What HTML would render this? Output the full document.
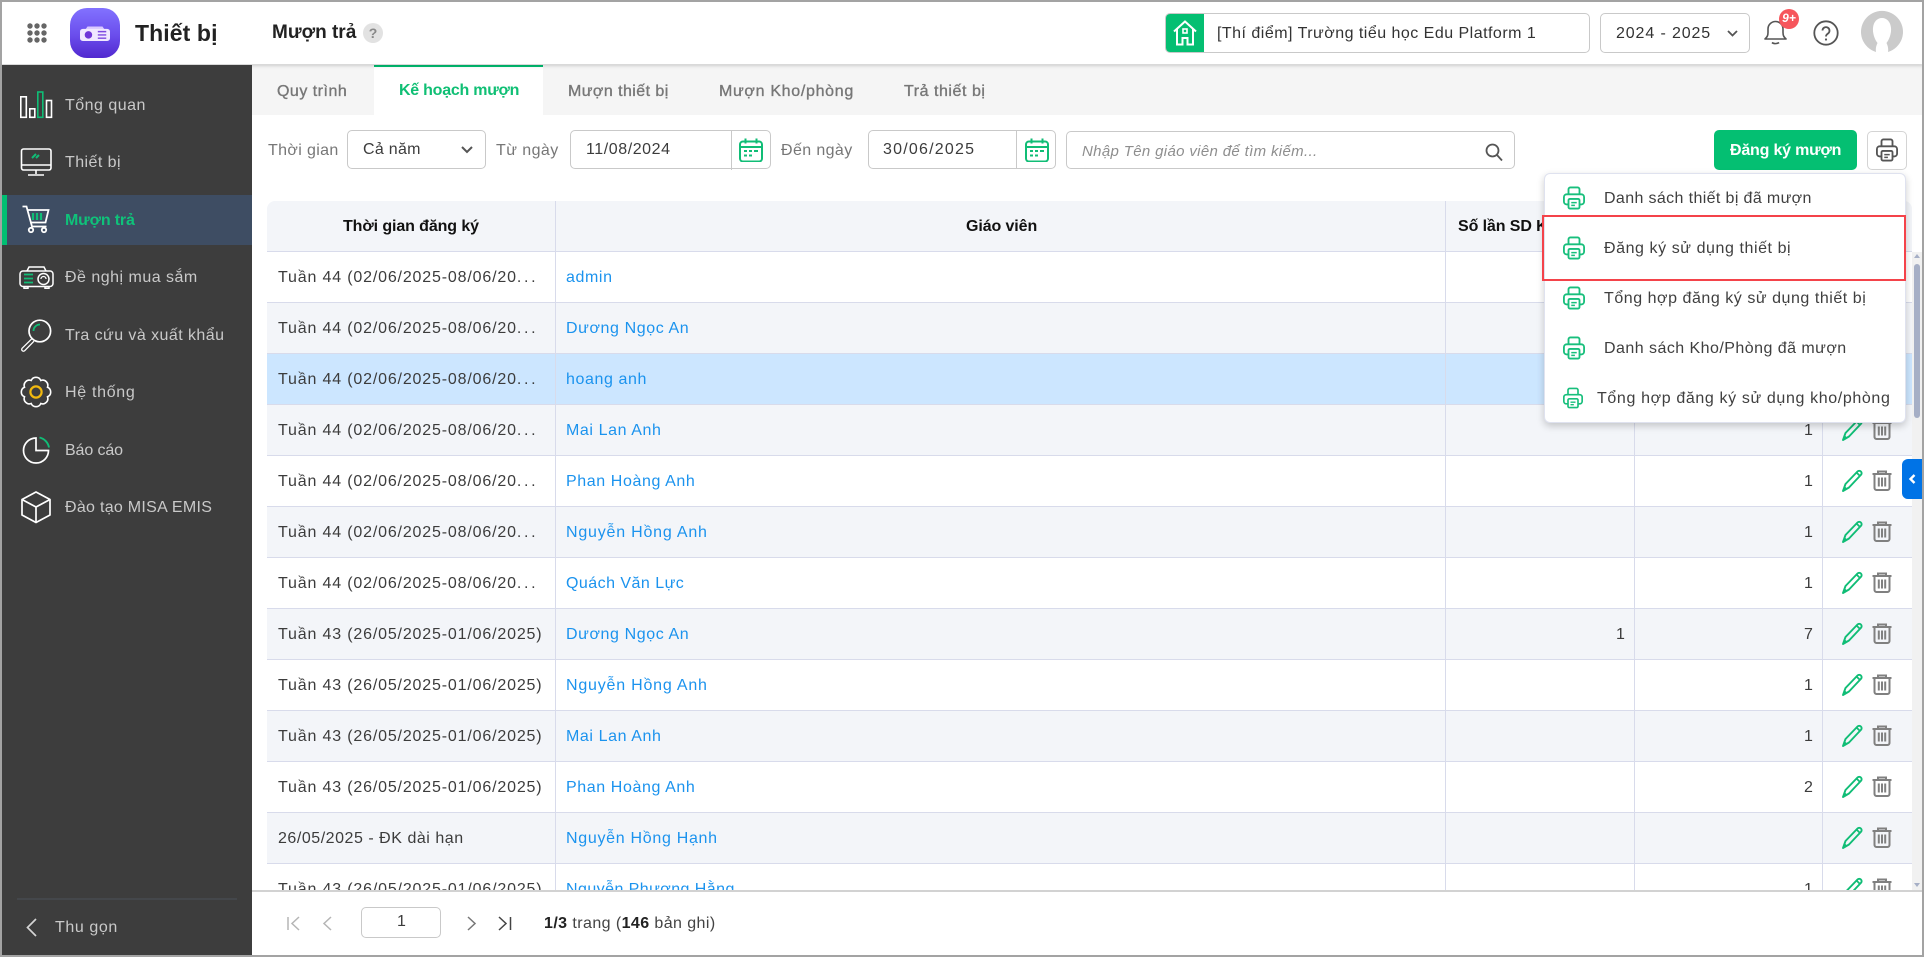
<!DOCTYPE html>
<html lang="vi">
<head>
<meta charset="utf-8">
<title>Thiết bị - Mượn trả</title>
<style>
*{box-sizing:border-box}
html,body{margin:0;padding:0}
body{width:1924px;height:957px;overflow:hidden;background:#fff;position:relative;font-family:"Liberation Sans",Arial,sans-serif;font-size:16px;letter-spacing:.09px;color:#3c3c3c}
.a{position:absolute}
.t{position:absolute;white-space:nowrap;line-height:20px;height:20px;margin-top:1px}
svg{position:absolute;overflow:visible;fill:none}
#wrap{position:absolute;left:0;top:0;width:1924px;height:957px}
.header{position:absolute;left:0;top:0;width:1924px;height:64px;background:#fff;box-shadow:0 1px 4px rgba(0,0,0,.25);z-index:5}
.side{position:absolute;left:0;top:65px;width:252px;height:892px;background:#3d3d3d;z-index:6}
.active{position:absolute;left:0;top:130px;width:252px;height:50px;background:linear-gradient(90deg,#3d3d3d 0,#3d3d3d 2px,#00bf72 2px,#00bf72 7px,#3e4d63 7px)}
.m{color:#c9c9c9;left:65px;letter-spacing:.44px}
.tabs{position:absolute;left:252px;top:65px;width:1672px;height:50px;background:#f5f5f5}
.tab-on{position:absolute;left:374px;top:65px;width:169px;height:50px;background:#fff;border-top:2px solid #00bf72}
.tb0{color:#777;font-weight:400;-webkit-text-stroke:.35px #777;top:81px}
.box{position:absolute;background:#fff;border:1px solid #c9c9c9;border-radius:5px}
.lbl{color:#777;letter-spacing:.36px}
.th{position:absolute;left:267px;top:201px;width:1645px;height:51px;background:#f3f5f9;border-bottom:1px solid #d8dbeb;border-radius:8px 8px 0 0}
.tb{position:absolute;left:267px;top:252px;width:1645px;height:638px;overflow:hidden}
.r{position:relative;height:51px;border-bottom:1px solid #d8dbeb;background:#fff}
.r.g{background:#f3f5f9}
.r.s{background:#cce6ff}
.c1{left:11px;top:15px;letter-spacing:.83px}
.c1 span{letter-spacing:2.73px}
.c2{left:299px;top:15px;color:#1b93ee;letter-spacing:.6px}
.c3{right:287px;top:15px}
.c4{right:99px;top:15px}
.r .p{left:1575px;top:13px;width:21px;height:23px}
.r .d{left:1605px;top:14px;width:20px;height:21px}
.vl{position:absolute;top:201px;width:1px;height:689px;background:#d8dbeb}
.foot{position:absolute;left:252px;top:890px;width:1672px;height:67px;background:#fff;border-top:2px solid #d2d2d2}
.menu{position:absolute;left:1544px;top:173px;width:362px;height:250px;background:#fff;border:1px solid #dfe2ef;border-radius:6px;box-shadow:0 3px 8px rgba(0,0,0,.2);z-index:8}
.it{color:#3f3f3f}
</style>
</head>
<body>
<svg width="0" height="0" style="position:absolute">
  <defs>
    <symbol id="printer" viewBox="0 0 24 26">
      <path d="M6 9V3.500A2 2 0 0 1 8 1.500h8a2 2 0 0 1 2 2V9" stroke="currentColor" stroke-width="2"/>
      <path d="M6 20H4a3 3 0 0 1-3-3v-5a3 3 0 0 1 3-3h16a3 3 0 0 1 3 3v5a3 3 0 0 1-3 3h-2" stroke="currentColor" stroke-width="2"/>
      <rect x="6" y="14" width="12" height="10.500" rx="1.500" stroke="currentColor" stroke-width="2" fill="#fff"/>
      <path d="M9 18h6M9 21h4" stroke="currentColor" stroke-width="1.600"/>
    </symbol>
    <symbol id="pencil" viewBox="0 0 21 23">
      <path d="M1 22 3.500 15 15.500 2.500a2.400 2.400 0 0 1 3.400 0 2.400 2.400 0 0 1 0 3.400L7 18.500Z" stroke="#10bd76" stroke-width="1.900" stroke-linejoin="round"/>
      <path d="M14.500 3.500 18 7" stroke="#10bd76" stroke-width="1.800"/>
      <path d="M1 22 2.500 17 5.500 20Z" fill="#10bd76"/>
    </symbol>
    <symbol id="trash" viewBox="0 0 20 21">
      <path d="M.5 4h19M6 4V1.500h8V4" stroke="#808080" stroke-width="2"/>
      <path d="M2.500 4v14a2 2 0 0 0 2 2h11a2 2 0 0 0 2-2V4" stroke="#808080" stroke-width="2"/>
      <path d="M6.800 7.500V16.500M10 7.500V16.500M13.200 7.500V16.500" stroke="#808080" stroke-width="2"/>
    </symbol>
    <symbol id="cal" viewBox="0 0 24 24">
      <rect x="1" y="3.500" width="22" height="20" rx="3" stroke="#10bd76" stroke-width="2"/>
      <path d="M1 9h22M6.500 .5v5M17.500 .5v5" stroke="#10bd76" stroke-width="2"/>
      <path d="M5 13h3M10 13h3M15 13h4M5 17.500h3M10 17.500h3" stroke="#10bd76" stroke-width="2"/>
    </symbol>
  </defs>
</svg>

<div id="wrap">

  <div class="tabs"></div>
  <div class="tab-on"></div>
  <div class="t tb0" style="left:277px;letter-spacing:.49px">Quy trình</div>
  <div class="t" style="left:399px;top:80px;color:#0fbf74;font-weight:700;letter-spacing:-.25px">Kế hoạch mượn</div>
  <div class="t tb0" style="left:568px;letter-spacing:.44px">Mượn thiết bị</div>
  <div class="t tb0" style="left:719px;letter-spacing:.69px">Mượn Kho/phòng</div>
  <div class="t tb0" style="left:904px;letter-spacing:.54px">Trả thiết bị</div>

  <div class="t lbl" style="left:268px;top:140px">Thời gian</div>
  <div class="box" style="left:347px;top:130px;width:139px;height:39px"></div>
  <div class="t" style="left:363px;top:139px;letter-spacing:.29px">Cả năm</div>
  <svg style="left:461px;top:146px" width="12" height="8"><path d="M1 1l5 5 5-5" stroke="#555" stroke-width="2"/></svg>

  <div class="t lbl" style="left:496px;top:140px;letter-spacing:.44px">Từ ngày</div>
  <div class="box" style="left:570px;top:130px;width:201px;height:39px"></div>
  <div class="a" style="left:731px;top:130px;width:1px;height:40px;background:#c9c9c9"></div>
  <div class="t" style="left:586px;top:139px;letter-spacing:.57px">11/08/2024</div>
  <svg style="left:739px;top:138px" width="24" height="24"><use href="#cal"/></svg>

  <div class="t lbl" style="left:781px;top:140px;letter-spacing:.39px">Đến ngày</div>
  <div class="box" style="left:868px;top:130px;width:188px;height:39px"></div>
  <div class="a" style="left:1016px;top:130px;width:1px;height:39px;background:#c9c9c9"></div>
  <div class="t" style="left:883px;top:139px;letter-spacing:1.22px">30/06/2025</div>
  <svg style="left:1025px;top:138px" width="24" height="24"><use href="#cal"/></svg>

  <div class="box" style="left:1066px;top:131px;width:449px;height:38px"></div>
  <div class="t" style="left:1082px;top:141px;color:#8e8e8e;font-style:italic;font-size:15px;letter-spacing:.34px">Nhập Tên giáo viên để tìm kiếm...</div>
  <svg style="left:1485px;top:143px" width="18" height="18"><circle cx="7.500" cy="7.500" r="6" stroke="#555" stroke-width="1.800"/><path d="M12 12l5 5.500" stroke="#555" stroke-width="1.800"/></svg>

  <div class="a" style="left:1714px;top:130px;width:143px;height:40px;background:#04bf72;border-radius:5px"></div>
  <div class="t" style="left:1730px;top:140px;color:#fff;font-weight:700;letter-spacing:-.2px">Đăng ký mượn</div>
  <div class="box" style="left:1867px;top:131px;width:40px;height:39px;border-color:#d4d4d4"></div>
  <svg style="left:1876px;top:138px;color:#555" width="22" height="24"><use href="#printer"/></svg>

  <div class="th"></div>
  <div class="t" style="left:343px;top:216px;font-weight:700;color:#111;letter-spacing:-.1px">Thời gian đăng ký</div>
  <div class="t" style="left:966px;top:216px;font-weight:700;color:#111;letter-spacing:-.1px">Giáo viên</div>
  <div class="t" style="left:1458px;top:216px;font-weight:700;color:#111;letter-spacing:-.1px">Số lần SD K</div>

  <div class="tb">
    <div class="r"><div class="t c1">Tuần 44 (02/06/2025-08/06/20<span>...</span></div><div class="t c2">admin</div><svg class="p"><use href="#pencil"/></svg><svg class="d"><use href="#trash"/></svg></div>
    <div class="r g"><div class="t c1">Tuần 44 (02/06/2025-08/06/20<span>...</span></div><div class="t c2">Dương Ngọc An</div><svg class="p"><use href="#pencil"/></svg><svg class="d"><use href="#trash"/></svg></div>
    <div class="r s"><div class="t c1">Tuần 44 (02/06/2025-08/06/20<span>...</span></div><div class="t c2">hoang anh</div><svg class="p"><use href="#pencil"/></svg><svg class="d"><use href="#trash"/></svg></div>
    <div class="r g"><div class="t c1">Tuần 44 (02/06/2025-08/06/20<span>...</span></div><div class="t c2">Mai Lan Anh</div><div class="t c4">1</div><svg class="p"><use href="#pencil"/></svg><svg class="d"><use href="#trash"/></svg></div>
    <div class="r"><div class="t c1">Tuần 44 (02/06/2025-08/06/20<span>...</span></div><div class="t c2">Phan Hoàng Anh</div><div class="t c4">1</div><svg class="p"><use href="#pencil"/></svg><svg class="d"><use href="#trash"/></svg></div>
    <div class="r g"><div class="t c1">Tuần 44 (02/06/2025-08/06/20<span>...</span></div><div class="t c2" style="letter-spacing:.79px">Nguyễn Hồng Anh</div><div class="t c4">1</div><svg class="p"><use href="#pencil"/></svg><svg class="d"><use href="#trash"/></svg></div>
    <div class="r"><div class="t c1">Tuần 44 (02/06/2025-08/06/20<span>...</span></div><div class="t c2" style="letter-spacing:.47px">Quách Văn Lực</div><div class="t c4">1</div><svg class="p"><use href="#pencil"/></svg><svg class="d"><use href="#trash"/></svg></div>
    <div class="r g"><div class="t c1">Tuần 43 (26/05/2025-01/06/2025)</div><div class="t c2">Dương Ngọc An</div><div class="t c3">1</div><div class="t c4">7</div><svg class="p"><use href="#pencil"/></svg><svg class="d"><use href="#trash"/></svg></div>
    <div class="r"><div class="t c1">Tuần 43 (26/05/2025-01/06/2025)</div><div class="t c2" style="letter-spacing:.79px">Nguyễn Hồng Anh</div><div class="t c4">1</div><svg class="p"><use href="#pencil"/></svg><svg class="d"><use href="#trash"/></svg></div>
    <div class="r g"><div class="t c1">Tuần 43 (26/05/2025-01/06/2025)</div><div class="t c2">Mai Lan Anh</div><div class="t c4">1</div><svg class="p"><use href="#pencil"/></svg><svg class="d"><use href="#trash"/></svg></div>
    <div class="r"><div class="t c1">Tuần 43 (26/05/2025-01/06/2025)</div><div class="t c2">Phan Hoàng Anh</div><div class="t c4">2</div><svg class="p"><use href="#pencil"/></svg><svg class="d"><use href="#trash"/></svg></div>
    <div class="r g"><div class="t c1" style="letter-spacing:.53px">26/05/2025 - ĐK dài hạn</div><div class="t c2" style="letter-spacing:.7px">Nguyễn Hồng Hạnh</div><svg class="p"><use href="#pencil"/></svg><svg class="d"><use href="#trash"/></svg></div>
    <div class="r"><div class="t c1">Tuần 43 (26/05/2025-01/06/2025)</div><div class="t c2" style="letter-spacing:.44px">Nguyễn Phương Hằng</div><div class="t c4">1</div><svg class="p"><use href="#pencil"/></svg><svg class="d"><use href="#trash"/></svg></div>
  </div>
  <div class="vl" style="left:555px"></div>
  <div class="vl" style="left:1445px"></div>
  <div class="vl" style="left:1634px"></div>
  <div class="vl" style="left:1822px"></div>

  <div class="a" style="left:1912px;top:252px;width:10px;height:638px;background:#f1f1f1"></div>
  <div class="a" style="left:1914px;top:264px;width:6px;height:154px;background:#a6afc6;border-radius:3px"></div>
  <svg style="left:1914px;top:254px" width="6" height="4"><path d="M0 4h6L3 0Z" fill="#a6afc6"/></svg>
  <svg style="left:1914px;top:883px" width="6" height="4"><path d="M0 0h6L3 4Z" fill="#a6afc6"/></svg>
  <div class="a" style="left:1902px;top:459px;width:20px;height:40px;background:#0073e6;border-radius:6px 0 0 6px;z-index:4"></div>
  <svg style="left:1909px;top:474px;z-index:4" width="7" height="10"><path d="M5.500 1 1.500 5l4 4" stroke="#fff" stroke-width="2.400"/></svg>

  <div class="foot"></div>
  <svg style="left:287px;top:916px" width="14" height="15"><path d="M1 1v13M12 1 5 7.500l7 6.500" stroke="#b5b5b5" stroke-width="1.500"/></svg>
  <svg style="left:322px;top:916px" width="11" height="15"><path d="M9 1 2 7.500l7 6.500" stroke="#b5b5b5" stroke-width="1.500"/></svg>
  <div class="box" style="left:361px;top:907px;width:80px;height:31px"></div>
  <div class="t" style="left:397px;top:911px">1</div>
  <svg style="left:466px;top:916px" width="11" height="15"><path d="M2 1l7 6.500L2 14" stroke="#777" stroke-width="1.500"/></svg>
  <svg style="left:498px;top:916px" width="14" height="15"><path d="M1 1l7 6.500L1 14M12.500 1v13" stroke="#444" stroke-width="1.500"/></svg>
  <div class="t" style="left:544px;top:913px;color:#444;letter-spacing:.42px"><b style="color:#222">1/3</b> trang (<b style="color:#222">146</b> bản ghi)</div>

  <div class="menu"></div>
  <div style="position:absolute;left:0;top:0;z-index:9">
    <svg style="left:1563px;top:186px;color:#18bf7c" width="22" height="24"><use href="#printer"/></svg>
    <svg style="left:1563px;top:236px;color:#18bf7c" width="22" height="24"><use href="#printer"/></svg>
    <svg style="left:1563px;top:286px;color:#18bf7c" width="22" height="24"><use href="#printer"/></svg>
    <svg style="left:1563px;top:336px;color:#18bf7c" width="22" height="24"><use href="#printer"/></svg>
    <svg style="left:1563px;top:386px;color:#18bf7c" width="20" height="24"><use href="#printer"/></svg>
    <div class="t it" style="left:1604px;top:188px;letter-spacing:.37px">Danh sách thiết bị đã mượn</div>
    <div class="t it" style="left:1604px;top:238px;letter-spacing:.57px">Đăng ký sử dụng thiết bị</div>
    <div class="t it" style="left:1604px;top:288px;letter-spacing:.54px">Tổng hợp đăng ký sử dụng thiết bị</div>
    <div class="t it" style="left:1604px;top:338px;letter-spacing:.46px">Danh sách Kho/Phòng đã mượn</div>
    <div class="t it" style="left:1597px;top:388px;letter-spacing:.63px">Tổng hợp đăng ký sử dụng kho/phòng</div>
    <div class="a" style="left:1542px;top:215px;width:364px;height:66px;border:2px solid #f4434a"></div>
  </div>

  <div class="side">
    <div class="active"></div>
    <svg style="left:0;top:-65px" width="252" height="957">
      <g stroke="#fff" stroke-width="1.600">
        <rect x="20.800" y="96.800" width="5.500" height="20.500"/>
        <rect x="29.800" y="108.800" width="5" height="8.500"/>
        <rect x="37.800" y="92" width="5" height="25.300" stroke="#10bd76"/>
        <rect x="46.500" y="100.500" width="5" height="16.800"/>
        <rect x="21.500" y="149" width="29.500" height="21" rx="2"/>
        <path d="M21.500 165h29.500M36 170v4M28 175h16"/>
        <path d="M32 158l4-4M36 158l3-3" stroke="#10bd76" stroke-width="2"/>
      </g>
      <g stroke="#fff" stroke-width="1.800">
        <path d="M22.500 206.500h4l5.500 20h14.500M27 210h21.500l-3 12.500H30"/>
        <circle cx="31" cy="230" r="2.200"/><circle cx="44" cy="230" r="2.200"/>
        <path d="M33 213v7M37 213v7M41 213v7" stroke="#10bd76" stroke-width="2.200"/>
      </g>
      <g stroke="#fff" stroke-width="1.500">
        <rect x="20" y="271" width="33" height="15.500" rx="3"/>
        <path d="M27 271l2-4h15l2 4M24 286.500v1.800h4v-1.800M45 286.500v1.800h4v-1.800"/>
        <circle cx="43.500" cy="279" r="5.500"/><path d="M41 279a2.500 2.500 0 0 1 5 0" stroke-width="1.200"/>
        <path d="M24 274.500h9M24 278.500h9M24 282.500h9" stroke="#10bd76" stroke-width="1.800"/>
      </g>
      <g stroke="#fff" stroke-width="1.700">
        <circle cx="39.800" cy="331" r="10.800"/>
        <path d="M31.800 338.800 22.200 348.200a1.700 1.700 0 0 0 2.500 2.500L34 341.200" stroke-width="1.300"/>
        <path d="M33.500 331a6.500 6.500 0 0 1 6.500-6.500" stroke="#10bd76" stroke-width="1.800"/>
      </g>
      <g transform="translate(36 392)" stroke="#fff" stroke-width="1.600">
        <path d="M11.500-4.800A5.200 5.200 0 0 1 11.500 4.800A5.200 5.200 0 0 1 4.800 11.500A5.200 5.200 0 0 1-4.800 11.500A5.200 5.200 0 0 1-11.500 4.800A5.200 5.200 0 0 1-11.500-4.800A5.200 5.200 0 0 1-4.800-11.500A5.200 5.200 0 0 1 4.800-11.500A5.200 5.200 0 0 1 11.500-4.800Z"/>
        <circle r="5.600" stroke="#f2b90f" stroke-width="2.200"/>
      </g>
      <g stroke="#fff" stroke-width="1.700">
        <path d="M36 438a12.500 12.500 0 1 0 12.500 12.500H36Z"/>
        <path d="M39.500 437.500a12.500 12.500 0 0 1 9.500 10" stroke="#10bd76" stroke-width="1.900"/>
      </g>
      <g stroke="#fff" stroke-width="1.700" stroke-linejoin="round">
        <path d="M36 492l14 7.500v15.500l-14 7.500-14-7.500V499.500Z"/>
        <path d="M22 499.500l14 7.500 14-7.500M36 507v15.500"/>
      </g>
      <path d="M17 899h220" stroke="#4b5159" stroke-width="1"/>
      <path d="M36 919 27.500 927.500 36 936" stroke="#d4d4d4" stroke-width="1.700"/>
    </svg>
    <div class="t m" style="top:30px;letter-spacing:.49px">Tổng quan</div>
    <div class="t m" style="top:87px">Thiết bị</div>
    <div class="t" style="left:65px;top:145px;color:#0fc27a;font-weight:700;letter-spacing:-.15px">Mượn trả</div>
    <div class="t m" style="top:202px;letter-spacing:.49px">Đề nghị mua sắm</div>
    <div class="t m" style="top:260px">Tra cứu và xuất khẩu</div>
    <div class="t m" style="top:317px;letter-spacing:.69px">Hệ thống</div>
    <div class="t m" style="top:375px;letter-spacing:-.11px">Báo cáo</div>
    <div class="t m" style="top:432px;letter-spacing:.29px">Đào tạo MISA EMIS</div>
    <div class="t" style="left:55px;top:852px;color:#c9c9c9;letter-spacing:.59px">Thu gọn</div>
  </div>

  <div class="header">
    <svg style="left:27px;top:23px" width="20" height="20">
      <g fill="#666"><circle cx="3" cy="3" r="2.700"/><circle cx="10" cy="3" r="2.700"/><circle cx="17" cy="3" r="2.700"/><circle cx="3" cy="10" r="2.700"/><circle cx="10" cy="10" r="2.700"/><circle cx="17" cy="10" r="2.700"/><circle cx="3" cy="17" r="2.700"/><circle cx="10" cy="17" r="2.700"/><circle cx="17" cy="17" r="2.700"/></g>
    </svg>
    <div class="a" style="left:70px;top:8px;width:50px;height:50px;border-radius:17px;background:linear-gradient(180deg,#8272ff 0%,#6a4dec 55%,#5128cf 100%)"></div>
    <svg style="left:80px;top:25px" width="30" height="17" viewBox="0 0 32 18">
      <path d="M6 4.500 8 1.500h16l2 3Z" fill="#d9c9ff"/>
      <rect x="0" y="4" width="32" height="13" rx="3" fill="#f0e8ff"/>
      <circle cx="9" cy="10.500" r="4" fill="#6f36d8"/>
      <path d="M19 7h9M19 10.500h9M19 14h9" stroke="#7e49e0" stroke-width="1.500"/>
    </svg>
    <div class="t" style="left:135px;top:21px;margin-top:0;font-size:23px;height:24px;line-height:24px;font-weight:700;color:#222;letter-spacing:.1px">Thiết bị</div>
    <div class="t" style="left:272px;top:22px;margin-top:0;font-size:19px;height:22px;line-height:22px;font-weight:700;color:#222;letter-spacing:0">Mượn trả</div>
    <div class="a" style="left:363px;top:23px;width:20px;height:20px;border-radius:50%;background:#e2e2e2;color:#888;font-size:14px;font-weight:700;text-align:center;line-height:20px;letter-spacing:0">?</div>

    <div class="box" style="left:1165px;top:13px;width:425px;height:40px;overflow:hidden;border-radius:5px"><div class="a" style="left:-1px;top:-1px;width:39px;height:40px;background:#04bf72"></div></div>
    <svg style="left:1173px;top:20px" width="24" height="26">
      <path d="M1 11.500 12 1.500l11 10" stroke="#fff" stroke-width="2"/>
      <path d="M4 9v15.500h5.500V18h5v6.500H20V9" stroke="#fff" stroke-width="2"/>
      <rect x="10" y="9" width="4" height="4" stroke="#fff" stroke-width="1.600"/>
    </svg>
    <div class="t" style="left:1217px;top:23px;color:#333;letter-spacing:.48px">[Thí điểm] Trường tiểu học Edu Platform 1</div>
    <div class="box" style="left:1600px;top:13px;width:150px;height:40px"></div>
    <div class="t" style="left:1616px;top:23px;color:#333;letter-spacing:.88px">2024 - 2025</div>
    <svg style="left:1727px;top:30px" width="11" height="8"><path d="M1 1l4.500 4.500L10 1" stroke="#555" stroke-width="1.800"/></svg>
    <svg style="left:1763px;top:19px" width="25" height="26">
      <path d="M2 20c2-2 3-3 3-6.500V10a7.500 7.500 0 0 1 15 0v3.500c0 3.500 1 4.500 3 6.500Z" stroke="#555" stroke-width="1.600" stroke-linejoin="round"/>
      <path d="M9 23.500c1.500 1.500 5.500 1.500 7 0" stroke="#555" stroke-width="1.600"/>
    </svg>
    <div class="a" style="left:1779px;top:9px;width:20px;height:20px;border-radius:50%;background:#f6565c;color:#fff;font-size:12px;font-weight:700;font-style:italic;line-height:19px;text-align:center;letter-spacing:0">9+</div>
    <svg style="left:1813px;top:20px" width="26" height="26">
      <circle cx="13" cy="13" r="11.700" stroke="#555" stroke-width="1.800"/>
      <path d="M9.500 10.500a3.500 3.500 0 1 1 5.500 3c-1.200.8-2 1.500-2 3" stroke="#555" stroke-width="1.800"/>
      <circle cx="13" cy="19.500" r="1.100" fill="#555"/>
    </svg>
    <svg style="left:1861px;top:14px" width="42" height="42">
      <path d="M15 38A21 21 0 1 1 27 38C27.500 35 27 32 25.500 29 28.500 25 30.500 19 30 14 29.500 8 26 4 21 4S12.500 8 12 14C11.500 19 13.500 25 16.500 29 15 32 14.500 35 15 38Z" fill="#cbcbcb"/>
    </svg>
  </div>

  <div class="a" style="left:0;top:0;width:1924px;height:2px;background:#a3a3a3;z-index:20"></div>
  <div class="a" style="left:0;top:955px;width:1924px;height:2px;background:#a3a3a3;z-index:20"></div>
  <div class="a" style="left:0;top:0;width:2px;height:957px;background:#a3a3a3;z-index:20"></div>
  <div class="a" style="left:1922px;top:0;width:2px;height:957px;background:#a3a3a3;z-index:20"></div>
</div>
</body>
</html>
